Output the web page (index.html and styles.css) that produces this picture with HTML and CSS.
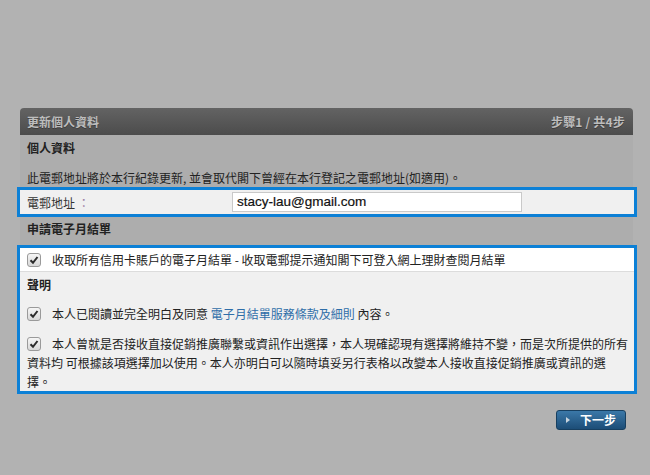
FILE: index.html
```html
<!DOCTYPE html>
<html lang="zh-Hant">
<head>
<meta charset="utf-8">
<title>更新個人資料</title>
<link rel="stylesheet" href="styles.css">
</head>
<body>
<div class="page">
  <div class="panel">
    <div class="panel-head">
      <span class="title">更新個人資料</span>
      <span class="step">步驟1 / 共4步</span>
    </div>
    <div class="panel-body">
      <div class="heading">個人資料</div>
      <div class="desc">此電郵地址將於本行紀錄更新, 並會取代閣下曾經在本行登記之電郵地址(如適用)。</div>
      <div class="hl-box email-box">
        <span class="label">電郵地址 <span class="colon">：</span></span>
        <span class="input">stacy-lau@gmail.com</span>
      </div>
      <div class="heading heading-2">申請電子月結單</div>
      <div class="hl-box estmt-box">
        <div class="white-row"><span class="cb"><svg viewBox="0 0 14 14" width="14" height="14"><path d="M3.5 7.2 L6 9.8 L10.5 4" fill="none" stroke="#2b2b2b" stroke-width="2"/></svg></span>收取所有信用卡賬戶的電子月結單 - 收取電郵提示通知閣下可登入網上理財查閱月結單</div>
        <div class="decl">
          <div class="heading-3">聲明</div>
          <div class="row r2"><span class="cb"><svg viewBox="0 0 14 14" width="14" height="14"><path d="M3.5 7.2 L6 9.8 L10.5 4" fill="none" stroke="#2b2b2b" stroke-width="2"/></svg></span>本人已閱讀並完全明白及同意 <a class="link" href="#">電子月結單服務條款及細則</a> 內容。</div>
          <div class="row r3"><span class="cb"><svg viewBox="0 0 14 14" width="14" height="14"><path d="M3.5 7.2 L6 9.8 L10.5 4" fill="none" stroke="#2b2b2b" stroke-width="2"/></svg></span>本人曾就是否接收直接促銷推廣聯繫或資訊作出選擇，本人現確認現有選擇將維持不變，而是次所提供的所有<br>資料均 可根據該項選擇加以使用。本人亦明白可以隨時填妥另行表格以改變本人接收直接促銷推廣或資訊的選<br>擇。</div>
        </div>
      </div>
    </div>
  </div>
  <div class="actions">
    <button class="next"><span class="tri"></span>下一步</button>
  </div>
</div>
</body>
</html>
```
FILE: styles.css
```css
html, body {
  margin: 0;
  padding: 0;
}
body {
  background: #b2b2b2;
  font-family: "Noto Sans CJK TC", "Liberation Sans", sans-serif;
  font-size: 12px;
  color: #222;
  width: 650px;
  height: 475px;
  overflow: hidden;
  text-spacing-trim: space-all;
}
.page {
  padding-top: 108px;
  width: 613px;
  margin-left: 20px;
}
.panel-head {
  height: 27px;
  border-radius: 4px 4px 0 0;
  background: linear-gradient(#636363, #4c4c4c);
  display: flex;
  align-items: center;
  justify-content: space-between;
  padding: 0 8px 0 7px;
  color: #bdbdbd;
  font-weight: bold;
  font-size: 12px;
  text-shadow: 0 1px 0 #3a3a3a;
}
.panel-head .step {
  letter-spacing: 0.2px;
}
.panel-body {
  background: #adadad;
}
.heading {
  font-weight: bold;
  height: 25px;
  line-height: 25px;
  padding-left: 7px;
}
.desc {
  padding: 8px 0 0 7px;
  line-height: 19px;
}
.hl-box {
  margin: 0 -4px 0 -3px;
  border: 3px solid #0c80d6;
  background: #f0f0f0;
}
.email-box {
  height: 24px;
  display: flex;
  align-items: center;
  padding-left: 7px;
}
.label {
  width: 205px;
  color: #333;
}
.colon {
  color: #9a7aa2;
}
.input {
  box-sizing: border-box;
  width: 290px;
  height: 20px;
  background: #fff;
  border: 1px solid #c9c9c9;
  font-family: "Liberation Sans", Arial, sans-serif;
  font-size: 13.5px;
  line-height: 18px;
  padding-left: 4px;
  color: #111;
  -webkit-text-stroke: 0.2px #111;
}
.heading-2 {
  height: 20px;
  line-height: 20px;
  padding: 2px 0 6px 7px;
}
.white-row {
  background: #fff;
  height: 23px;
  line-height: 23px;
  padding-left: 7px;
  border-bottom: 1px solid #dcdcdc;
  display: flex;
  align-items: center;
}
.cb {
  display: inline-block;
  box-sizing: border-box;
  width: 14px;
  height: 14px;
  border: 1px solid #9a9a9a;
  border-radius: 3px;
  background: linear-gradient(#f6f6f6, #d8d8d8);
  margin-right: 11px;
  vertical-align: -2px;
  flex: none;
  position: relative;
}
.cb svg {
  position: absolute;
  left: -1px;
  top: -1px;
}
.decl {
  padding: 3px 0 0 7px;
}
.heading-3 {
  font-weight: bold;
  line-height: 20px;
}
.row {
  line-height: 20px;
  white-space: nowrap;
}
.r2 {
  margin-top: 9px;
}
.r3 {
  margin-top: 9.5px;
  line-height: 19px;
}
.link {
  color: #2f6ea8;
  text-decoration: none;
}
.actions {
  display: flex;
  justify-content: flex-end;
  padding: 16px 7px 0 0;
}
.next {
  box-sizing: border-box;
  width: 70px;
  height: 20px;
  border: 1px solid #173f60;
  border-radius: 3px;
  background: linear-gradient(#3b78a8, #1c4d77);
  color: #fff;
  font-family: "Noto Sans CJK TC", sans-serif;
  font-weight: bold;
  font-size: 12px;
  padding: 0 0 0 9px;
  display: flex;
  align-items: center;
  line-height: 18px;
  cursor: pointer;
}
.tri {
  width: 0;
  height: 0;
  border-left: 4px solid #c8d4de;
  border-top: 3.5px solid transparent;
  border-bottom: 3.5px solid transparent;
  margin-right: 10px;
}
```
